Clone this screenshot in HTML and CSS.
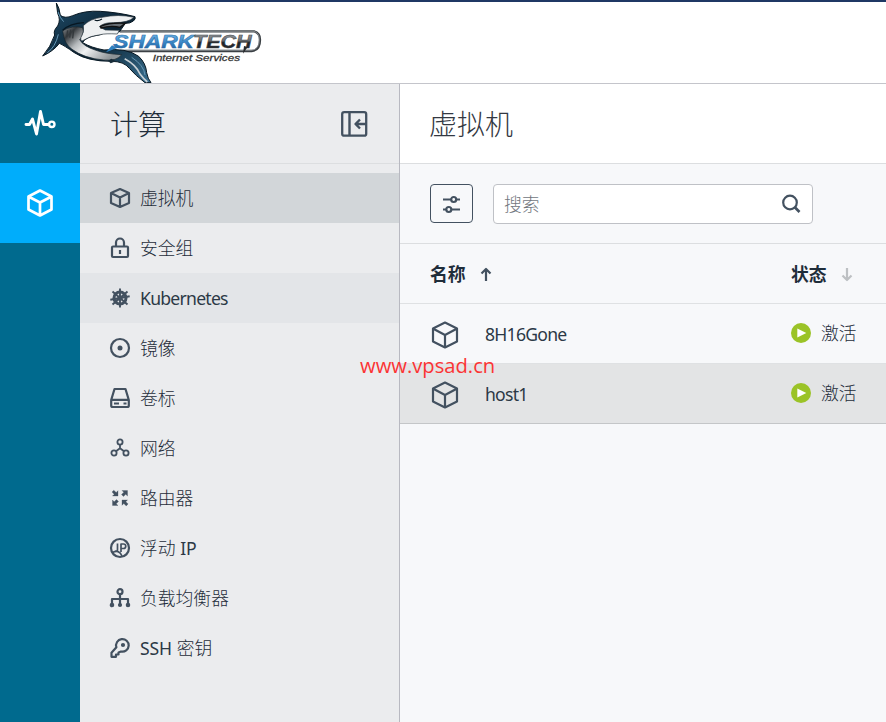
FILE: index.html
```html
<!DOCTYPE html>
<html lang="zh-CN">
<head>
<meta charset="utf-8">
<title>虚拟机</title>
<link rel="stylesheet" href="styles.css">
</head>
<body>
<svg width="0" height="0" class="defs">
  <defs>
    <symbol id="cube" viewBox="0 0 30 30"><path d="M15 2.500 27 8.500v13L15 27.500 3 21.500v-13zM3.300 8.700 15 15l11.700-6.300M15 15v12"/></symbol>
    <symbol id="play" viewBox="0 0 20 20"><circle cx="10" cy="10" r="10" fill="#9bc327"/><path d="M6.300 5.600v8.800l9-4.400z" fill="#fff"/></symbol>
  </defs>
</svg>
<header class="topbar">
  <svg class="logo" viewBox="0 9 720 240">
    <defs>
      <linearGradient id="steel" x1="0" y1="0" x2="0" y2="1"><stop offset="0" stop-color="#a4a9ae"/><stop offset=".45" stop-color="#666b70"/><stop offset=".55" stop-color="#202326"/><stop offset="1" stop-color="#2b2f33"/></linearGradient>
      <linearGradient id="blue" x1="0" y1="0" x2="0" y2="1"><stop offset="0" stop-color="#7cc0ee"/><stop offset=".5" stop-color="#3c8bcb"/><stop offset="1" stop-color="#1b5795"/></linearGradient>
      <linearGradient id="skin" x1="0" y1="0" x2="1" y2="1"><stop offset="0" stop-color="#214f6c"/><stop offset=".5" stop-color="#0b2334"/><stop offset="1" stop-color="#397091"/></linearGradient>
      <linearGradient id="belly" x1="0" y1="0" x2="1" y2=".6"><stop offset="0" stop-color="#8b8f93"/><stop offset=".18" stop-color="#34383c"/><stop offset=".4" stop-color="#b5b9bc"/><stop offset=".6" stop-color="#f0f1f2"/><stop offset="1" stop-color="#8d9397"/></linearGradient>
    </defs>
    <path d="M270 94H672Q690 98 690 119Q690 151 665 153H270" fill="#fff" stroke="#3b4045" stroke-width="7"/>
    <path d="M270 94H672Q688 98 688 119Q688 148 665 151H270" fill="none" stroke="#a3a8ac" stroke-width="2"/>
    <path d="M79 9Q88 22 91 46Q105 57 128 47Q165 31 211 34Q270 38 315 50Q318 57 310 63Q300 71 286 70L268 96Q239 89 211 104Q163 111 158 128Q183 143 222 150Q290 143 326 169Q348 190 350 218Q353 236 363 248H345Q316 226 298 205Q282 184 244 184Q172 184 133 158Q102 136 88 130Q71 153 38 168Q62 141 74 105Q69 92 83 78Q93 60 83 40Z" fill="url(#skin)" stroke="#071722" stroke-width="3"/>
    <path d="M98 92Q126 75 158 83Q165 103 149 119Q160 139 198 151Q228 162 275 164Q261 184 221 180Q163 175 126 148Q102 132 98 92Z" fill="url(#belly)" stroke="#15222b" stroke-width="2"/>
    <path d="M160 77Q180 56 216 52Q265 41 312 52Q296 68 251 68Q222 67 208 80L226 90L268 91L262 102Q226 100 211 104Q180 107 158 122Q150 124 153 112Q164 96 160 77Z" fill="#eef0f1" stroke="#24313a" stroke-width="2"/>
    <path d="M212 79Q240 67 286 70L270 82Q243 75 213 84Z" fill="#686f75" stroke="#111" stroke-width="4"/>
    <path d="M194 60Q203 65 216 57M98 91Q120 70 162 68" fill="none" stroke="#071722" stroke-width="4"/>
    <path d="M113 91l-3 20M122 89l-3 24M131 88l-3 27" fill="none" stroke="#33383c" stroke-width="4"/>
    <path d="M84 36Q91 56 101 65M305 172Q342 196 345 225M85 103Q76 142 52 158" fill="none" stroke="#6697b5" stroke-width="3"/>
    <path d="M284 176Q318 194 330 222Q342 238 352 246" fill="none" stroke="#c9d1d6" stroke-width="5"/>
    <path d="M244 176l-10 6 8 8 16-6z" fill="#182c39"/>
    <text x="250" y="143" class="brand blue" textLength="242" lengthAdjust="spacingAndGlyphs">SHARK</text>
    <text x="489" y="143" class="brand steel" textLength="176" lengthAdjust="spacingAndGlyphs">TECH</text>
    <path d="M246 136l-18 21 34-13z" fill="#2f7fbf"/>
    <path d="M642 138l-3 23 14-20z" fill="#26292c"/>
    <text x="368" y="182" class="tagline" textLength="262" lengthAdjust="spacingAndGlyphs">Internet Services</text>
  </svg>
</header>
<div class="shell">
  <nav class="rail">
    <a class="rail-item"><svg class="icon" width="32" height="32" viewBox="0 0 32 32"><path d="M2 17.500H5.500L8.500 12l4 15 4-22.500 3 13H24" stroke-width="2.900" stroke-linecap="round"/><circle cx="27.800" cy="17.300" r="2.700" stroke-width="2.400"/></svg></a>
    <a class="rail-item active"><svg class="icon" width="32" height="32" viewBox="0 0 32 32"><path d="M16 3.500 27.500 9.500v13L16 28.500 4.500 22.500v-13zM4.800 9.700 16 15.500l11.200-5.800M16 15.500v12.500" stroke-width="2.700"/></svg></a>
  </nav>
  <aside class="sidebar">
    <div class="heading side-heading"><h2>计算</h2>
      <svg class="icon" width="28" height="28" viewBox="0 0 28 28"><rect x="2.200" y="2.200" width="24" height="23.500" rx="2" stroke-width="2.300"/><path d="M9.500 2v24M26 14H16M20 9.500 15.500 14l4.500 4.500" stroke-width="2.400"/></svg>
    </div>
    <ul class="menu">
      <li class="selected"><svg class="icon" width="22" height="22" viewBox="0 0 22 22"><path d="M11 2 20 6v10l-9 4-9-4V6zM2 6l9 4.500L20 6M11 10.500V20"/></svg><span>虚拟机</span></li>
      <li><svg class="icon" width="22" height="22" viewBox="0 0 22 22"><rect x="3" y="9.500" width="16" height="10.500" rx="1"/><path d="M7 9V5.500a4 4 0 0 1 8 0V9M11 13v4"/></svg><span>安全组</span></li>
      <li class="hover"><svg class="icon" width="22" height="22" viewBox="0 0 22 22"><circle cx="11" cy="11" r="6" stroke-width="3"/><circle cx="11" cy="11" r="1.500"/><path d="M11 1.500v19M1.300 12.800l19.400-3.600M3.500 4.500l15 13M18.500 4.500l-15 13" stroke-width="1.900"/></svg><span class="latin">Kubernetes</span></li>
      <li><svg class="icon" width="22" height="22" viewBox="0 0 22 22"><circle cx="11" cy="11" r="9"/><circle cx="11" cy="11" r="2.500" class="solid" stroke="none"/></svg><span>镜像</span></li>
      <li><svg class="icon" width="22" height="22" viewBox="0 0 22 22"><path d="M5.500 2h11l3.300 11v5.500q0 1.500-1.500 1.500H3.700q-1.500 0-1.500-1.500V13zM2.200 12.800h17.600M5 16.500h5M14.500 16.500h3"/></svg><span>卷标</span></li>
      <li><svg class="icon thin" width="22" height="22" viewBox="0 0 22 22"><circle cx="11" cy="5" r="2.600"/><circle cx="5" cy="16" r="2.600"/><circle cx="17" cy="16" r="2.600"/><path d="M11 7.600v3.600L7 14.300M11 11.200l4 3.100"/></svg><span>网络</span></li>
      <li><svg class="icon" width="22" height="22" viewBox="0 0 22 22"><path class="solid" d="M9 9H3.500l1.700-1.700L3 5l1.800-1.800L7.200 5.500 9 3.700zM13 3.500h5.500V9l-1.800-1.700L14.500 9.500l-2-2L14.800 5.300zM3.500 13v5.500H9l-1.800-1.700 2.300-2.300-2-2-2.300 2.300zM13 13h5.500l-1.700 1.700 2.300 2.300-1.900 1.900-2.400-2.400-1.800 1.800z" stroke-width=".3"/></svg><span>路由器</span></li>
      <li><svg class="icon" width="22" height="22" viewBox="0 0 22 22"><circle cx="11" cy="11" r="9"/><path d="M8.500 6.500v6q0 2-2.500 1.500M12 15V7h2.500a2 2 0 0 1 0 4.500H12M3.500 15.500Q10 12 13 19" stroke-width="1.700"/></svg><span>浮动 <b class="latin">IP</b></span></li>
      <li><svg class="icon" width="22" height="22" viewBox="0 0 22 22"><circle cx="11" cy="4.700" r="2.500"/><path d="M11 7v10.500M3 18v-6h16v6"/><g class="solid"><circle cx="3" cy="18" r="1.200"/><circle cx="11" cy="18" r="1"/><circle cx="19" cy="18" r="1.200"/></g></svg><span>负载均衡器</span></li>
      <li><svg class="icon" width="22" height="22" viewBox="0 0 22 22"><path d="M7.400 10.300A6.300 6.300 0 1 1 12 14.500L9.500 15.500v2H7v2.300H2.500v-4z"/><circle cx="14" cy="8" r="1" class="solid"/></svg><span><b class="latin">SSH</b> 密钥</span></li>
    </ul>
  </aside>
  <main class="content">
    <div class="heading main-heading"><h1>虚拟机</h1></div>
    <div class="toolbar">
      <button class="filter"><svg class="icon" width="22" height="22" viewBox="0 0 22 22"><path d="M2 6.500h8M15.500 6.500h3.500M2 16.500h3.500M11 16.500h8"/><circle cx="12.700" cy="6.500" r="2.500"/><circle cx="7.800" cy="16.500" r="2.500"/></svg></button>
      <div class="search"><span>搜索</span><svg class="icon" width="22" height="22" viewBox="0 0 22 22"><circle cx="10" cy="9.500" r="6.800"/><path d="m14.800 14.300 4.700 4.700" stroke-width="2.700"/></svg></div>
    </div>
    <div class="row table-head">
      <div class="name">名称<svg class="icon arrow" width="12" height="16" viewBox="0 0 12 16"><path d="M6 15V3M1.500 7.500 6 3 10.500 7.500"/></svg></div>
      <div class="state">状态<svg class="icon arrow muted" width="12" height="16" viewBox="0 0 12 16"><path d="M6 2v12M1.500 9.500 6 14 10.500 9.500"/></svg></div>
    </div>
    <div class="row">
      <div class="name"><svg class="icon vm" width="30" height="30"><use href="#cube"/></svg><span class="latin">8H16Gone</span></div>
      <div class="state status"><svg class="play" width="20" height="20"><use href="#play"/></svg>激活</div>
    </div>
    <div class="row picked">
      <div class="name"><svg class="icon vm" width="30" height="30"><use href="#cube"/></svg><span class="latin">host1</span></div>
      <div class="state status"><svg class="play" width="20" height="20"><use href="#play"/></svg>激活</div>
    </div>
  </main>
</div>
<div class="watermark">www.vpsad.cn</div>
</body>
</html>
```
FILE: styles.css
```css
* { box-sizing: border-box; }
body { margin: 0; height: 722px; overflow: hidden; display: flex; flex-direction: column; background: #f7f8fa; color: #1f2d3a; font: 300 17.8px/26px "Noto Sans", "Noto Sans CJK SC", sans-serif; }
.defs { position: absolute; }
h1, h2 { margin: 0 0 0 -1px; font-size: 28px; line-height: 40px; font-weight: 300; }
.latin { font-weight: 400; font-size: 17.6px; letter-spacing: -.75px; color: #2c3946; }
b.latin { letter-spacing: -.1px; }
.topbar { flex: none; height: 84px; background: #fff; border-top: 2px solid #1f3864; border-bottom: 1px solid #c4c5cb; padding: 1px 0 0 30px; }
.logo { display: block; width: 240px; height: 80px; }
.brand { font: italic 700 54px "Liberation Sans", sans-serif; stroke-width: 1.5; }
.brand.blue { fill: url(#blue); stroke: #2a6ba6; }
.brand.steel { fill: url(#steel); stroke: #3a3f44; }
.tagline { font: italic 400 29px "Liberation Sans", sans-serif; fill: #333; stroke: #333; stroke-width: .8; }
.icon { flex: none; fill: none; stroke: #435160; stroke-width: 2.2; stroke-linejoin: round; }
.icon .solid { fill: #435160; }
.icon.thin { stroke-width: 1.8; }
.shell { flex: 1; display: grid; grid-template-columns: 80px 320px 1fr; }
.rail { background: #006a8e; margin-top: -1px; }
.rail-item { height: 80px; display: flex; align-items: center; justify-content: center; }
.rail-item.active { background: #00adfb; }
.rail .icon { stroke: #fff; }
.sidebar { background: #ebecee; border-right: 1px solid #b8b9c1; }
.heading { height: 80px; display: flex; align-items: center; border-bottom: 1px solid #dcdee0; padding: 1px 31px 0 30px; }
.side-heading { justify-content: space-between; }
.side-heading h2 { margin-left: 0; }
.main-heading { background: #fff; color: #333842; }
.menu { list-style: none; margin: 9px 0 0; padding: 0; }
.menu li { height: 50px; display: flex; align-items: center; gap: 9px; padding-left: 29px; }
.menu .selected { background: #d2d6d9; }
.menu .hover { background: #e3e5e8; }
.toolbar { height: 80px; display: flex; align-items: center; gap: 20px; padding-left: 30px; border-bottom: 1px solid #dcdee0; }
.filter { width: 43px; height: 39px; padding: 0; display: flex; align-items: center; justify-content: center; background: #f7f8fa; border: 1px solid #435160; border-radius: 4px; }
.search { width: 320px; height: 40px; display: flex; align-items: center; justify-content: space-between; padding: 0 10px; background: #fff; border: 1px solid #bfc1c6; border-radius: 4px; color: #71767d; }
.row { height: 60px; display: grid; grid-template-columns: 361px 1fr; align-items: center; padding-left: 30px; border-bottom: 1px solid #dfe1e3; }
.name, .state { display: flex; align-items: center; }
.status { padding-bottom: 2px; }
.table-head { font-weight: 700; }
.arrow { margin-left: 14px; }
.arrow.muted { stroke: #bdc0c3; }
.vm { margin: 2px 25px 0 0; }
.play { margin-right: 10px; }
.picked { background: #e3e4e5; border-bottom-color: #c4c6c8; }
.watermark { position: absolute; left: 360px; top: 352px; font: 400 20.2px/26px "Open Sans", sans-serif; color: #fb3434; }
```
